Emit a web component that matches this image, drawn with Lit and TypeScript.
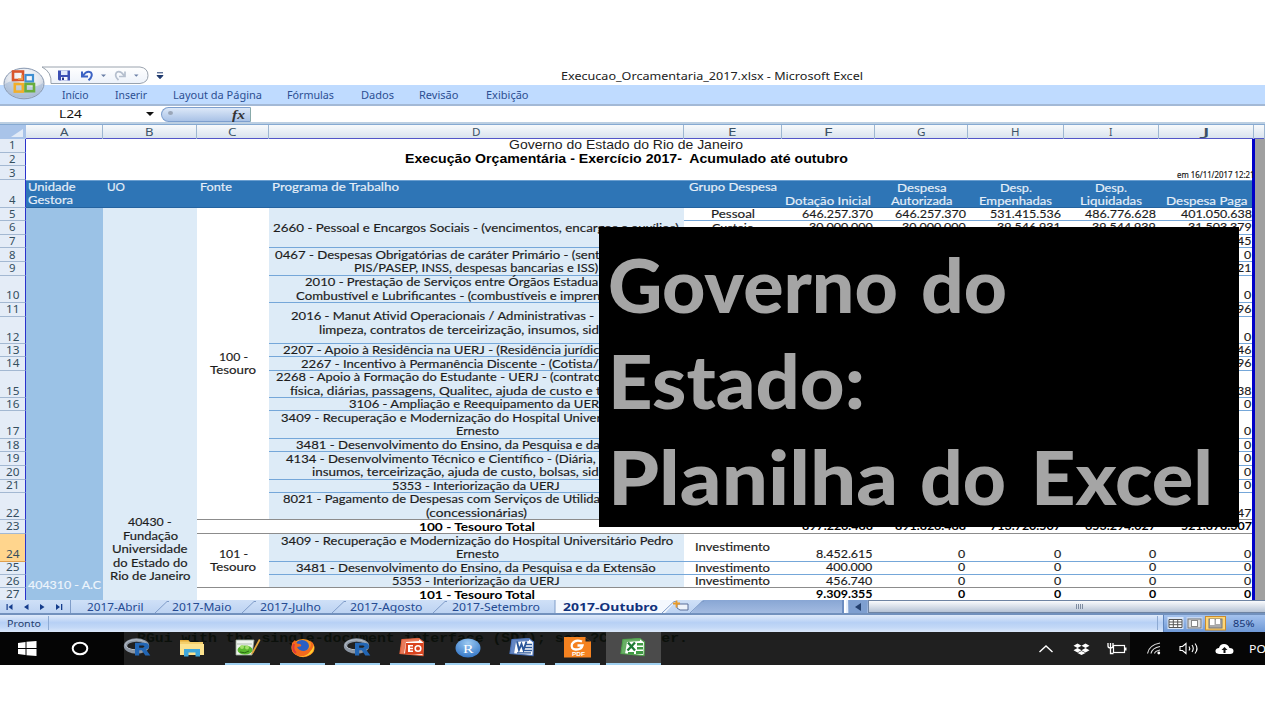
import { LitElement, html, css, svg, nothing } from "lit";
import { customElement, property } from "lit/decorators.js";
import { styleMap } from "lit/directives/style-map.js";

/** One line of text, stretched horizontally to a given width. */
@customElement("fit-text")
class FitText extends LitElement {
  @property() text = "";
  @property({ type: Number }) w = 0;
  static styles = css`
    :host { display: block; flex: none; }
    .ink { display: inline-block; white-space: pre; transform-origin: 0 50%; vertical-align: top; }
  `;
  updated() {
    const ink = this.renderRoot.querySelector(".ink") as HTMLElement;
    this.style.width = this.w + "px";
    ink.style.transform = "none";
    const natural = ink.getBoundingClientRect().width;
    if (natural) ink.style.transform = `scaleX(${this.w / natural})`;
  }
  render() { return html`<span class="ink">${this.text}</span>`; }
}

const t = (text: string, w: number, cls = "") =>
  html`<fit-text class=${cls} .text=${text} .w=${w}></fit-text>`;

type Item = [number, number, unknown];
/** Lays items out in a row from their start and width, as gaps between neighbours. */
const lane = (items: Item[]) => {
  let at = 0;
  return items.map(([x, w, content]) => {
    const gap = x - at;
    at = x + w;
    return html`<div class="slot" style=${styleMap({ marginLeft: gap + "px", width: w + "px" })}>${content}</div>`;
  });
};
const words = (list: [string, number, number][]): Item[] =>
  list.map(([s, a, b]) => [a, b - a, t(s, b - a)] as Item);

const COLS = [26, 77, 94, 72, 415, 97.5, 93.5, 93, 95.5, 95, 95.5, 11];
const ROW_ENDS = [152.5, 166, 180, 207.5, 221, 234.5, 248, 262, 275.5, 302.5, 316.5, 344, 357, 370.5, 398, 411, 438.5, 452, 465.5, 479.5, 492.5, 520, 533.5, 561.5, 574.5, 588, 601.5];
const ROWS = ROW_ENDS.map((e, i) => e - (i ? ROW_ENDS[i - 1] : 139));
const tpl = (a: number[]) => a.map((v) => v + "px").join(" ");

const cell = (c: number, r: number, span: number, cls: string, content: unknown = nothing, cspan = 1) =>
  html`<div class="cell ${cls}" style=${styleMap({ gridColumn: `${c} / span ${cspan}`, gridRow: `${r} / span ${span}` })}>${content}</div>`;

/* first row, row span, lines: [text, start, end] */
const PROGRAMS: [number, number, [string, number, number][]][] = [
  [5, 3, [["2660 - Pessoal e Encargos Sociais - (vencimentos, encargos e auxílios)", 273.3, 679]]],
  [8, 2, [["0467 - Despesas Obrigatórias de caráter Primário - (sent", 274.7, 599.5], ["PIS/PASEP, INSS, despesas bancarias e ISS)", 354.3, 598.5]]],
  [10, 1, [["2010 - Prestação de Serviços entre Órgãos Estadua", 304.7, 598], ["Combustível e Lubrificantes - (combustíveis e impren", 295.7, 600]]],
  [11, 2, [["2016 - Manut Ativid Operacionais / Administrativas -", 291, 594], ["limpeza, contratos de terceirização, insumos, sid", 319, 599]]],
  [13, 1, [["2207 - Apoio à Residência na UERJ - (Residência jurídic", 283, 599.5]]],
  [14, 1, [["2267 - Incentivo à Permanência Discente - (Cotista/", 300.7, 598.5]]],
  [15, 1, [["2268 - Apoio à Formação do Estudante - UERJ - (contrato", 276, 601], ["física, diárias, passagens, Qualitec, ajuda de custo e t", 290, 601]]],
  [16, 1, [["3106 - Ampliação e Reequipamento da UERJ", 348.7, 604.3]]],
  [17, 1, [["3409 - Recuperação e Modernização do Hospital Universitário Pedro", 280.5, 672.7], ["Ernesto", 455.5, 498.5]]],
  [18, 1, [["3481 - Desenvolvimento do Ensino, da Pesquisa e da Extensão", 296.3, 656]]],
  [19, 2, [["4134 - Desenvolvimento Técnico e Científico - (Diária,", 286.3, 596], ["insumos, terceirização, ajuda de custo, bolsas, sid", 312.3, 599]]],
  [21, 1, [["5353 - Interiorização da UERJ", 392.3, 560]]],
  [22, 1, [["8021 - Pagamento de Despesas com Serviços de Utilida", 283, 600], ["(concessionárias)", 426, 527]]],
  [24, 1, [["3409 - Recuperação e Modernização do Hospital Universitário Pedro", 280.5, 672.7], ["Ernesto", 455.5, 498.5]]],
  [25, 1, [["3481 - Desenvolvimento do Ensino, da Pesquisa e da Extensão", 296.3, 656]]],
  [26, 1, [["5353 - Interiorização da UERJ", 392.3, 560]]],
];

const VALUES: Record<number, string[]> = {
  5: ["646.257.370", "646.257.370", "531.415.536", "486.776.628", "401.050.638"],
  6: ["30.000.000", "30.000.000", "39.546.931", "39.544.939", "31.503.379"],
  7: ["", "", "", "", "45"], 8: ["", "", "", "", "0"], 9: ["", "", "", "", "21"], 10: ["", "", "", "", "0"],
  11: ["", "", "", "", "96"], 12: ["", "", "", "", "0"], 13: ["", "", "", "", "46"], 14: ["", "", "", "", "96"],
  15: ["", "", "", "", "38"], 16: ["", "", "", "", "0"], 17: ["", "", "", "", "0"], 18: ["", "", "", "", "0"],
  19: ["", "", "", "", "0"], 20: ["", "", "", "", "0"], 21: ["", "", "", "", "0"], 22: ["", "", "", "", "47"],
  23: ["897.226.488", "891.826.488", "713.720.507", "653.294.027", "521.878.307"],
  24: ["8.452.615", "0", "0", "0", "0"],
  25: ["400.000", "0", "0", "0", "0"],
  26: ["456.740", "0", "0", "0", "0"],
  27: ["9.309.355", "0", "0", "0", "0"],
};
const numWidth = (s: string) => [...s].reduce((n, c) => n + (c === "." ? 3.1 : 7.2), 0);

const pic = (w: number, h: number, body: unknown) =>
  html`<svg class="pic" width=${w} height=${h} viewBox="0 0 ${w} ${h}">${body}</svg>`;

const orb = pic(50, 40, svg`
  <defs>
    <radialGradient id="orb" cx=".5" cy=".3" r=".8"><stop offset="0" stop-color="#fff"/><stop offset=".5" stop-color="#e3e7ee"/><stop offset=".8" stop-color="#b9c6d8"/><stop offset="1" stop-color="#eef3fa"/></radialGradient>
  </defs>
  <ellipse cx="24" cy="17.5" rx="20" ry="15.3" fill="url(#orb)" stroke="#8797b0" stroke-width="1"/>
  <path d="M5 18Q13 12 23 18T43 17Q42 31 24 32Q6 31 5 18Z" fill="#9fb6d6" opacity=".55"/>
  <g fill="none" stroke-width="2.6">
    <rect x="13" y="5.5" width="10" height="8.5" stroke="#d9562c"/>
    <rect x="25.5" y="9" width="7.5" height="6.5" stroke="#3f8fd2" stroke-width="2.2"/>
    <rect x="14.8" y="18" width="8" height="7.6" stroke="#f2ae2a"/>
    <rect x="25.5" y="18" width="8.5" height="7.2" stroke="#69ad3c"/>
  </g>
  <path d="M18 13h5M22 9v5" stroke="#f3a04a" stroke-width="1.4"/>`);

const quickAccess = pic(124, 20, svg`
  <defs><linearGradient id="qa" x2="0" y2="1"><stop offset="0" stop-color="#fff"/><stop offset="1" stop-color="#edf2fa"/></linearGradient></defs>
  <path d="M1 1H99Q107 2 107 9.5Q107 16.5 99 17.5H10Q11 6 1 1Z" fill="url(#qa)" stroke="#8f98a5" stroke-width=".9"/>
  <path d="M17 4.5h12v10H18l-1-1Z" fill="#3b4fb4"/><path d="M20 4.5h6.5v4.5H20Z" fill="#dfe8fb"/><path d="M20 11h6.5v3.5H20Z" fill="#f5f7ff"/><path d="M21 11.6h2v2.5h-2Z" fill="#26358c"/>
  <path d="M41 5.5v5h6M42 9.5Q46 4 50 6.5Q52.500 10 47.500 14.300" fill="none" stroke="#3c63c4" stroke-width="2"/>
  <path d="M60 8.500h5l-2.500 2.500ZM93 8.500h4.500l-2.200 2.300Z" fill="#6a7fa6"/>
  <path d="M84 5.500v5h-6M83 9.500Q79 4 75.500 6.500Q73 10 77.500 14" fill="none" stroke="#b5bfce" stroke-width="1.700"/>
  <path d="M116 6.800h6M116 9.500h6l-3 3.200Z" stroke="#1f3a6e" stroke-width="1" fill="#1f3a6e"/>`);

const rIcon = pic(28, 20, svg`
  <ellipse cx="12.500" cy="8" rx="11" ry="6" fill="none" stroke="#8c96a3" stroke-width="3.400"/>
  <ellipse cx="12" cy="6.800" rx="10.500" ry="5" fill="none" stroke="#b9c1cb" stroke-width="1"/>
  <path d="M11 4.800h9q5 .3 5 3.500 0 2.600-3 3.300l4.300 6h-5l-3.500-5.300h-2.600v5.300H11ZM15.200 7.500v2.300h3.500q1.700 0 1.700-1.200 0-1.100-1.700-1.100Z" fill="#2266b5"/>`);
const folder = pic(26, 18, svg`
  <path d="M1 1h8l2 2h13v13H1Z" fill="#f5cf6b"/><path d="M1 5h24v11H1Z" fill="#fce28e"/>
  <path d="M5 10h16v7.500h-4.500v-4h-7v4H5Z" fill="#3fa7dc"/><path d="M1 1h8l1.500 1.500H1Z" fill="#e6ad3b"/>`);
const notepad = pic(26, 20, svg`
  <path d="M1 2h18l-2 15H1Z" fill="#eef3ee" stroke="#9aa79a" stroke-width=".8"/><path d="M2 5h15v2H2Z" fill="#cfd8cf"/>
  <ellipse cx="10" cy="12" rx="7.500" ry="4.600" fill="#59b82e"/><circle cx="7" cy="9" r="2" fill="#a3e069"/><circle cx="12" cy="9.500" r="2" fill="#a3e069"/>
  <path d="M5 14q5 2 9-1" stroke="#2a6b14" fill="none"/><path d="M24 1l-7 13-1.500 3 3-2 7-13Z" fill="#e2a43b"/>`);
const firefox = pic(26, 20, svg`
  <ellipse cx="13" cy="10" rx="11.500" ry="9" fill="#f7931e"/><ellipse cx="12" cy="8" rx="7" ry="6" fill="#2a5fc4"/>
  <path d="M2 5q-2 9 5 12.500t13-.5q5-4 4-9-1-4-4-5.500 2 4 0 7t-6 3.500q-5 0-7-4l4-.8q1-1.500-1-2.200L7 5.500 5 2Z" fill="#f36a1d"/>
  <path d="M24 7q1 7-5 10t-12 .5q8 2 12-2.500t5-8Z" fill="#ffcf2e"/><path d="M4 6q-2 6 2 9" stroke="#df3a3a" stroke-width="2" fill="none"/>`);
const office = (c: string, glyph: unknown) => pic(27, 19, svg`
  <path d="M3 1.500L20 .5 24.500 4 24 17.500 1 15.500Z" fill="#fff" stroke=${c} stroke-width="1.200"/>
  <path d="M3 1.500L20 .5 20 3 7 4 5 15.900 1 15.500Z" fill=${c} opacity=".85"/>${glyph}`);
const ppt = office("#e4633d", svg`<path d="M7 5h17v11H6Z" fill="#d9431f"/><path d="M9 7h5v1.600h-3v1.200h3v1.500h-3v1.200h3v1.500H9Z" fill="#fff"/><circle cx="19" cy="10.500" r="2.800" fill="none" stroke="#fff" stroke-width="1.600"/>`);
const word = office("#4a72b8", svg`<path d="M8 3.500l2 8.500 2.500-6 2 6 3-8.500" fill="none" stroke="#2b579a" stroke-width="1.900"/><path d="M16 6.500h7M16 9.500h7M15 12.500h8M8 14.800h14" stroke="#2b579a" stroke-width="1.300"/>`);
const excel = office("#4ea14a", svg`<path d="M8 4.500l7 8M15 4.500l-7.500 8" stroke="#1f7a35" stroke-width="2.300"/><path d="M17 5h6v2.500h-6ZM17 9h6v2.500h-6ZM16 13h7v3h-7ZM8 14h6v2H8Z" fill="#3f9a43"/>`);
const rstudio = pic(26, 20, svg`
  <defs><radialGradient id="rs" cx=".5" cy=".25" r=".8"><stop offset="0" stop-color="#9ccaf2"/><stop offset="1" stop-color="#2d71c4"/></radialGradient></defs>
  <ellipse cx="13" cy="10" rx="12.500" ry="9.600" fill="url(#rs)"/><text x="8" y="14.500" font-family="Liberation Serif, serif" font-size="13" fill="#fff" textLength="10.500" lengthAdjust="spacingAndGlyphs">R</text>`);
const foxit = pic(28, 21, svg`
  <path d="M0 0h21l6 5v15.500H0Z" fill="#f58220"/><path d="M21 0v5h6Z" fill="#202020"/><path d="M21 0v5h6" fill="none" stroke="#f58220"/>
  <path d="M18 4.500q-7-2.500-10 2.500-1.500 5 3.500 5.500 6 .3 7-4h-5" fill="none" stroke="#fff" stroke-width="2.300"/>
  <text x="8" y="19.300" font-family="Liberation Sans, sans-serif" font-size="6" font-weight="700" fill="#fff" textLength="13" lengthAdjust="spacingAndGlyphs">PDF</text>`);
const windows = pic(19, 15, svg`<path d="M0 2l7.500-1v6H0ZM8.500 .8L18.500 0v7h-10ZM0 8h7.500v6L0 13ZM8.500 8h10v7L8.500 14.200Z" fill="#fff"/>`);
const ring = pic(18, 15, svg`<ellipse cx="9" cy="7.500" rx="7.300" ry="5.800" fill="none" stroke="#fff" stroke-width="2"/>`);
const chevron = pic(16, 10, svg`<path d="M1.500 8L8 2l6.500 6" fill="none" stroke="#fff" stroke-width="1.400"/>`);
const dropbox = pic(17, 12, svg`<path d="M4.500 .5L8.500 2.700 4.500 5 .5 2.700ZM12.500 .5l4 2.200-4 2.300-4-2.300ZM4.500 5l4 2.200-4 2.200-4-2.200ZM12.500 5l4 2.200-4 2.200-4-2.200ZM8.500 8l4 2-4 2-4-2Z" fill="#fff"/>`);
const battery = pic(20, 13, svg`<rect x="6.500" y="3.500" width="11" height="7" fill="none" stroke="#fff" stroke-width="1.200"/><path d="M18 5.500h1.500v3H18Z" fill="#fff"/><path d="M1 1v3q0 2 2.500 2T6 4V1M3.500 1v10.500h3" fill="none" stroke="#fff" stroke-width="1.300"/>`);
const wifi = pic(16, 13, svg`<path d="M1.500 11.500Q3 3 14 1M5 11.500Q6 6 14 4.500M8.500 11.500Q9 9 14 8" fill="none" stroke="#ddd" stroke-width="1.200"/><circle cx="12.800" cy="11" r="1.400" fill="#fff"/>`);
const speaker = pic(21, 13, svg`<path d="M1 4.500h2.500L7 1.500v10L3.500 8.500H1Z" fill="none" stroke="#fff" stroke-width="1.100"/><path d="M10 4.500q1.500 2 0 4M13 3q2.500 3.500 0 7M16 1.500q4 5 0 10" fill="none" stroke="#fff" stroke-width="1.100"/>`);
const cloud = pic(19, 12, svg`<path d="M4 11q-4-.5-3.500-3.500Q1 5 4 5 5 1 9 1t5.500 4q4 0 4 3t-3.500 3Z" fill="#fff"/><path d="M9.500 4L6.500 7h2v3h2V7h2Z" fill="#111"/>`);

const slant = (x: number) => svg`<path d="M${x} 13L${x + 12} 1.500H${x + 14}" fill="none" stroke="#7f9cc8" stroke-width="1"/>`;
const tabShapes = html`<svg class="tabshapes" width="842" height="13" viewBox="0 0 842 13">
  <defs><linearGradient id="tb" x2="0" y2="1"><stop offset="0" stop-color="#cfe0f7"/><stop offset="1" stop-color="#bdd3f2"/></linearGradient></defs>
  <path d="M0 0H703L691 13H0Z" fill="url(#tb)"/>
  <path d="M555 0H677L665 13H555Z" fill="#f4f8fe"/>
  <path d="M70.500 0v13M555 0v13" stroke="#7f9cc8"/>
  ${[155, 242, 332, 433, 662, 690].map(slant)}
  <g fill="#143c8c"><path d="M12.500 4v6L8.500 7ZM6.500 4h1.200v6H6.500ZM28.500 4v6L24 7ZM40 4v6l4.500-3ZM56 4v6l4-3ZM61 4h1.300v6H61Z"/></g>
  <path d="M677 4h11v6h-8l-3-2Z" fill="#eef3fb" stroke="#5b6f99"/><path d="M673 3.500h7M676.500 .5v7" stroke="#e79a2a" stroke-width="1.800"/>
</svg>`;

@customElement("app-root")
class AppRoot extends LitElement {
  static styles = css`
    :host { display: block; width: 1280px; height: 720px; background: #fff; overflow: hidden; position: relative; }
    .window { width: 1265px; padding-top: 66px; overflow: hidden; font: 11px/13.4px Lato, sans-serif; color: #1c1c1c; }
    .pic { display: block; flex: none; overflow: visible; }
    .ui { font-family: "Noto Sans", sans-serif; }
    .slot { flex: none; min-width: 0; }
    .lane { display: flex; }
    .title { height: 19px; font-size: 11px; line-height: 19px; color: #222; }
    .titletext { display: flex; height: 19px; }
    .orb { position: absolute; left: 0; top: 66px; }
    .ribbon { height: 21px; box-sizing: border-box; background: #bfdbff; border-bottom: 2px solid #a3b9d6; font-size: 10px; line-height: 21px; color: #2c4f93; }
    .formula { height: 18px; box-sizing: border-box; border-bottom: 2px solid #bccfe2; line-height: 16px; font-size: 11px; color: #111; }
    .caret { width: 0; margin-top: 6px; border: 4px solid transparent; border-top: 4px solid #111; border-bottom: 0; }
    .fx { height: 15px; margin-top: .5px; border-radius: 9px 0 0 9px; background: linear-gradient(#dce8f8, #a9c2e6); border: 1px solid #7d9fce; border-right-color: #8aa; box-sizing: border-box; display: flex; justify-content: space-between; padding: 0 5px 0 6px; font: italic bold 13px/13px "Liberation Serif", serif; color: #333; }
    .knob { width: 5px; height: 4px; border-radius: 50%; background: #9aa6b8; margin-top: 3.5px; }
    .heads { display: grid; height: 15px; margin-top: 0; box-sizing: border-box; border-top: 1px solid #86aad2; border-bottom: 1.500px solid #5355c8; background: linear-gradient(#f8fafc, #d9e3ee); font-size: 10.500px; line-height: 14px; color: #3c5266; }
    .head { border-right: 1px solid #9db6d1; display: flex; justify-content: center; }
    .corner { background: #a9c4e9; display: flex; justify-content: flex-end; align-items: flex-end; padding: 0 3px 2px; }
    .corner::after { content: ""; border-left: 12px solid transparent; border-bottom: 8px solid #e2ebf7; }
    .sheet { display: grid; height: 461px; overflow: hidden; background: #fff; }
    .cell { display: flex; flex-direction: column; justify-content: center; align-items: center; min-width: 0; box-sizing: border-box; -webkit-text-stroke: .15px currentColor; }
    .rown { background: #e4ecf7; border-bottom: 1px solid #a3b8d2; border-right: 1.500px solid #2a32cc; justify-content: flex-end; color: #344e5e; font: 10.500px/12.500px "Noto Sans", sans-serif; -webkit-text-stroke: 0; }
    .on { background: #ffd58d; border-color: #e0a050; border-right-color: #2a32cc; }
    .arial { font: 12.200px/13.500px "Liberation Sans", sans-serif; padding-right: 28px; -webkit-text-stroke: 0; }
    .strong { font-weight: 700; color: #000; -webkit-text-stroke: 0; }
    .stamp { font: 8px/10px "Noto Sans", sans-serif; align-items: flex-end; justify-content: flex-end; color: #111; }
    .band { background: #2e75b6; border-top: 1px solid #6b9fd0; border-bottom: 1px solid #2463a0; }
    .hd { color: #e6eff8; align-items: flex-start; justify-content: flex-start; }
    .hc { color: #e6eff8; justify-content: flex-end; }
    .a { background: #9bc2e6; justify-content: flex-end; color: #eef5fc; padding-bottom: 10.500px; }
    .b { background: #ddebf7; justify-content: flex-end; padding-bottom: 19px; }
    .d { background: #ddebf7; border-bottom: 1px solid #75a7d9; align-items: flex-start; }
    .ln { border-bottom: 1px solid #75a7d9; }
    .tot { border-bottom: 1.500px solid #8c8c8c; }
    .num { align-items: flex-end; justify-content: flex-end; padding-right: 2.500px; }
    .edge { background: #a0a0a0; border-left: 1px solid #c8c8d8; }
    .blue { border-right: 3px solid #0000c8; margin-right: -1px; }
    .tabs { height: 13px; display: grid; background: linear-gradient(#88a6d4, #a3bbe1); font-size: 10.500px; line-height: 14px; color: #244a92; overflow: hidden; }
    .tabshapes, .tabrow { grid-area: 1 / 1; display: flex; }
    .tabrow { z-index: 1; }
    .live { font-weight: 700; color: #10327c; }
    .grip { height: 13px; background: #fff; border-left: 2px solid #6b8cc0; box-sizing: border-box; border-right: 2px solid #e8f0fb; }
    .arrowbox { height: 13px; background: #7e9fd0; display: flex; align-items: center; justify-content: center; }
    .arrowbox::after { content: ""; border: 4px solid transparent; border-left: 0; border-right: 6px solid #24406e; }
    .bar { height: 13px; box-sizing: border-box; border: 1px solid #6f84a3; border-right: 0; background: linear-gradient(#fafbfd, #b7c4d6); display: flex; align-items: center; padding-left: 207px; }
    .bar::after { content: ""; width: 7px; height: 5px; background: repeating-linear-gradient(90deg, #7d8ba0 0 1px, transparent 1px 2px); }
    .status { height: 19px; box-sizing: border-box; border-top: 2px solid #7291bd; background: linear-gradient(#e0ebfa, #b7d0f5 45%, #c4d9f7 75%, #dbe8fa); color: #24406e; font-size: 9.500px; line-height: 17px; }
    .sep { height: 14px; margin-top: 1px; border-right: 1px solid #8daad3; box-sizing: border-box; }
    .views { height: 17px; background: linear-gradient(#a4c2ee, #6f99d6); border-left: 1px solid #5f84bb; box-sizing: border-box; display: flex; color: #143472; }
    .task { height: 33px; background: #202020; display: grid; }
    .ghost { grid-area: 1 / 1; display: flex; font: bold 12px/15px "Liberation Mono", monospace; color: #0b100b; }
    .icons { grid-area: 1 / 1; display: flex; align-items: stretch; z-index: 1; }
    .black { height: 33px; background: #050505; display: flex; align-items: center; }
    .app { height: 33px; box-sizing: border-box; display: flex; align-items: center; justify-content: center; border-bottom: 2px solid #9fd0f0; }
    .idle { border-color: transparent; }
    .cur { background: #4b4b4b; }
    .tray { height: 33px; display: flex; align-items: center; }
    .dark { background: #060606; color: #fff; font-size: 11.500px; overflow: hidden; }
    .banner { position: absolute; left: 599px; top: 227px; width: 640px; height: 300px; background: #000; color: #a5a5a5; font: 900 74.500px/96px Lato, sans-serif; box-sizing: border-box; padding-top: 9px; }
  `;

  private sheet() {
    const line = (r: number) => (r === 22 || r === 23 || r === 26 ? "tot" : "ln");
    return html`<div class="sheet" style=${styleMap({ gridTemplateColumns: tpl(COLS), gridTemplateRows: tpl(ROWS) })}>
      ${ROWS.map((_, i) => cell(1, i + 1, 1, i === 23 ? "rown on" : "rown", t(String(i + 1), i < 9 ? 6.500 : 13.500)))}
      ${cell(2, 1, 1, "arial", t("Governo do Estado do Rio de Janeiro", 234), 10)}
      ${cell(2, 2, 1, "arial strong", t("Execução Orçamentária - Exercício 2017-  Acumulado até outubro", 443), 10)}
      ${cell(2, 3, 1, "stamp", t("em 16/11/2017 12:21", 77.500), 10)}
      ${cell(2, 4, 1, "band", nothing, 10)}
      ${cell(2, 4, 1, "hd", html`<div class="lane">${lane([[2, 48, t("Unidade", 47.500)]])}</div><div class="lane">${lane([[1.500, 45, t("Gestora", 45)]])}</div>`)}
      ${cell(3, 4, 1, "hd", html`<div class="lane">${lane([[3.500, 18, t("UO", 18)]])}</div>`)}
      ${cell(4, 4, 1, "hd", html`<div class="lane">${lane([[2.500, 32, t("Fonte", 32)]])}</div>`)}
      ${cell(5, 4, 1, "hd", html`<div class="lane">${lane([[2.500, 127, t("Programa de Trabalho", 127)]])}</div>`)}
      ${cell(6, 4, 1, "hd", html`<div class="lane">${lane([[5, 88, t("Grupo Despesa", 88)]])}</div>`)}
      ${cell(7, 4, 1, "hc", t("Dotação Inicial", 86))}
      ${cell(8, 4, 1, "hc", [t("Despesa", 49.500), t("Autorizada", 61.500)])}
      ${cell(9, 4, 1, "hc", [t("Desp.", 32), t("Empenhadas", 73)])}
      ${cell(10, 4, 1, "hc", [t("Desp.", 32), t("Liquidadas", 62)])}
      ${cell(11, 4, 1, "hc", t("Despesa Paga", 81.500))}
      ${cell(2, 5, 23, "a", t("404310 - A.C", 73))}
      ${cell(3, 5, 23, "b", [t("40430 -", 43.500), t("Fundação", 55), t("Universidade", 75.500), t("do Estado do", 74.500), t("Rio de Janeiro", 80.500)])}
      ${cell(4, 5, 18, "tot", [t("100 -", 29), t("Tesouro", 46)])}
      ${cell(4, 24, 3, "tot", [t("101 -", 29), t("Tesouro", 46)])}
      ${PROGRAMS.map(([r, span, lines]) => cell(5, r, span, "d " + line(r + span - 1), lines.map(([s, a, b]) => html`<div class="lane">${lane([[a - 269, b - a, t(s, b - a)]])}</div>`)))}
      ${cell(4, 23, 1, "tot")}
      ${cell(5, 23, 1, "tot strong", t("100 - Tesouro Total", 116))}
      ${cell(5, 27, 1, "strong", t("101 - Tesouro Total", 116))}
      ${Object.keys(VALUES).map((k) => {
        const r = Number(k);
        const label: Record<number, [string, number]> = { 5: ["Pessoal", 44], 6: ["Custeio", 42], 24: ["Investimento", 75], 25: ["Investimento", 75], 26: ["Investimento", 75] };
        const l = label[r];
        const bold = r === 23 || r === 27 ? " strong" : "";
        return [
          cell(6, r, 1, line(r), l ? t(l[0], l[1]) : nothing),
          ...VALUES[r].map((v, i) => cell(7 + i, r, 1, "num " + line(r) + bold, v ? t(v, numWidth(v)) : nothing)),
        ];
      })}
      ${cell(12, 1, 27, "edge")}
      ${cell(11, 1, 27, "blue")}
    </div>`;
  }

  render() {
    const letters = ["A", "B", "C", "D", "E", "F", "G", "H", "I", "J", ""];
    const underline = (x: number, icon: unknown, w = 45, cls = ""): Item => [x, w, html`<div class="app ${cls}">${icon}</div>`];
    return html`
      <div class="window">
        <div class="title ui lane">${lane([[41, 124, quickAccess], [561, 302, t("Execucao_Orcamentaria_2017.xlsx - Microsoft Excel", 302)]])}</div>
        <div class="ribbon ui lane">${lane(words([["Início", 62, 88.500], ["Inserir", 114.500, 146.500], ["Layout da Página", 172.500, 261.500], ["Fórmulas", 286.500, 333.500], ["Dados", 360.500, 393.500], ["Revisão", 419, 458.500], ["Exibição", 485.500, 528]]))}</div>
        <div class="formula ui lane">${lane([[59, 23, t("L24", 23)], [146, 8, html`<div class="caret"></div>`], [161, 90, html`<div class="fx"><div class="knob"></div>${t("fx", 13)}</div>`]])}</div>
        <div class="heads ui" style=${styleMap({ gridTemplateColumns: tpl(COLS) })}>
          <div class="corner"></div>
          ${letters.map((c) => html`<div class="head">${c ? t(c, c === "I" ? 3.500 : 8.500) : nothing}</div>`)}
        </div>
        ${this.sheet()}
        <div class="tabs ui">
          ${tabShapes}
          <div class="tabrow">${lane([
            ...words([["2017-Abril", 86.500, 143], ["2017-Maio", 171.500, 231], ["2017-Julho", 260, 321], ["2017-Agosto", 349.500, 422], ["2017-Setembro", 452, 540]]),
            [563, 95, t("2017-Outubro", 95, "live")],
            [842, 6, html`<div class="grip"></div>`],
            [849, 18, html`<div class="arrowbox"></div>`],
            [868, 397, html`<div class="bar"></div>`],
          ])}</div>
        </div>
        <div class="status ui lane">${lane([
          [6.500, 34, t("Pronto", 34)], [41, 8, html`<div class="sep"></div>`], [1150, 8, html`<div class="sep"></div>`],
          [1163, 102, html`<div class="views">${lane([
            [3, 17, pic(17, 17, svg`<rect x=".5" y="2" width="16" height="12" fill="#d8e5f8"/><path d="M2 4.500h13v8H2ZM2 7h13M2 9.700h13M6.300 4.500v8M10.700 4.500v8" fill="#fff" stroke="#555"/>`)],
            [22, 17, pic(17, 17, svg`<rect x=".5" y="2" width="16" height="12" fill="#c5d6f0"/><rect x="2" y="4" width="13" height="9" fill="#ddd" stroke="#777"/><rect x="5.500" y="5.500" width="6" height="6" fill="#fff" stroke="#888"/>`)],
            [41, 21, pic(21, 17, svg`<rect x=".5" y="1.500" width="20" height="13.500" fill="#ffd777" stroke="#c98b2c"/><rect x="4" y="4" width="13" height="9" fill="#aaa" stroke="#777"/><path d="M5 4h4.500v6H5ZM11 4h4v5h-4Z" fill="#fff"/>`)],
            [69, 22, t("85%", 21.500)],
          ])}</div>`],
        ])}</div>
        <div class="task">
          <div class="ghost">${lane([[137, 551, t("RGui with the single-document interface (SDI); see ?Commander.", 551)]])}</div>
          <div class="icons">${lane([
            [0, 124, html`<div class="black">${lane([[17.500, 19, windows], [71, 18, ring]])}</div>`],
            underline(124, rIcon, 28, "idle"), underline(179, folder, 26, "idle"),
            underline(225, notepad), underline(280, firefox), underline(335, rIcon), underline(390, ppt), underline(445, rstudio), underline(500, word), underline(555, foxit),
            underline(606, excel, 54.500, "cur"),
            [1038, 92, html`<div class="tray">${lane([[0, 16, chevron], [35, 17, dropbox], [69, 20, battery]])}</div>`],
            [1130, 135, html`<div class="tray dark ui">${lane([[15.500, 16, wifi], [48.500, 21, speaker], [84.500, 19, cloud], [119, 17, t("PO", 17)]])}</div>`],
          ])}</div>
        </div>
      </div>
      <div class="orb">${orb}</div>
      <div class="banner">
        <div class="lane">${lane([[9, 290, t("Governo", 290)], [322, 87, t("do", 86)]])}</div>
        <div class="lane">${lane([[9, 257, t("Estado:", 257)]])}</div>
        <div class="lane">${lane([[9, 290, t("Planilha", 290)], [321, 86, t("do", 86)], [432, 182, t("Excel", 182)]])}</div>
      </div>`;
  }
}
